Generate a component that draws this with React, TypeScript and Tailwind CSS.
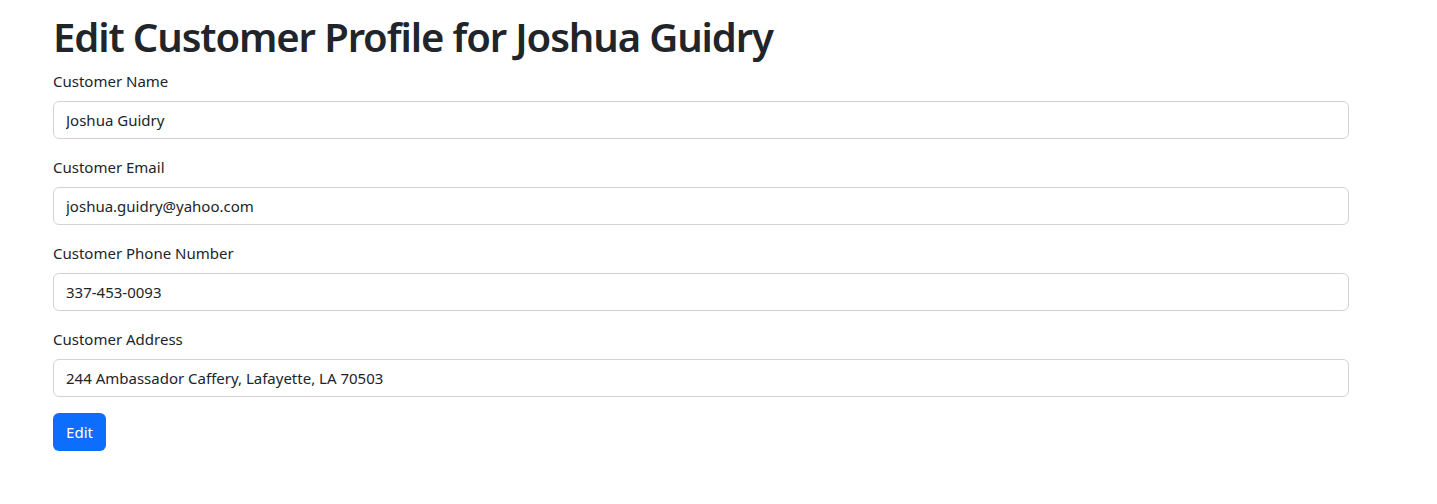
import React from "react";

const fields = [
  { label: "Customer Name", value: "Joshua Guidry" },
  { label: "Customer Email", value: "joshua.guidry@yahoo.com" },
  { label: "Customer Phone Number", value: "337-453-0093" },
  { label: "Customer Address", value: "244 Ambassador Caffery, Lafayette, LA 70503" },
];

const App = () => {
  return (
    <div className="min-h-screen bg-white text-[#212529] font-['Noto_Sans',sans-serif] pt-[13px] pl-[53px]">
      <div className="w-[1296px]">
        <h1 className="text-[40px] leading-[48px] font-semibold tracking-[-1.1px] mb-2">
          Edit Customer Profile for Joshua Guidry
        </h1>
        <form onSubmit={(e) => e.preventDefault()}>
          {fields.map((field, index) => (
            <div key={index} className="mb-4">
              <label className="block text-[15px] leading-6 mb-2">{field.label}</label>
              <input
                type="text"
                defaultValue={field.value}
                className="block w-full h-[38px] px-3 text-[15px] text-[#212529] border border-[#ced4da] rounded-[6px] outline-none"
              />
            </div>
          ))}
          <button
            type="submit"
            className="h-[38px] w-[53px] text-[15px] text-white bg-[#0d6efd] rounded-[6px]"
          >
            Edit
          </button>
        </form>
      </div>
    </div>
  );
};

export default App;
